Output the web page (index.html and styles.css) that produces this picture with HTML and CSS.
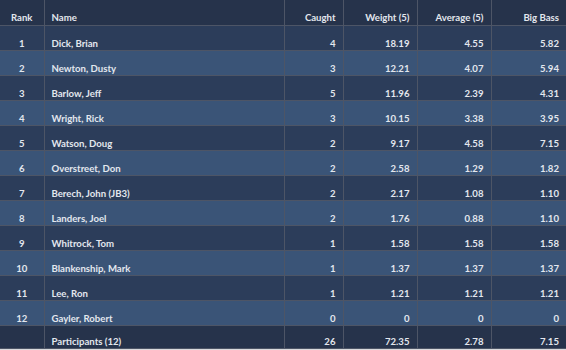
FILE: index.html
```html
<!DOCTYPE html>
<html>
<head>
<meta charset="utf-8">
<link rel="stylesheet" href="styles.css">
</head>
<body>
<table class="standings">
  <colgroup>
    <col class="c-rank"><col class="c-name"><col class="c-caught"><col class="c-weight"><col class="c-avg"><col class="c-big">
  </colgroup>
  <thead>
    <tr><th class="ctr">Rank</th><th class="lft">Name</th><th>Caught</th><th>Weight (5)</th><th>Average (5)</th><th>Big Bass</th></tr>
  </thead>
  <tbody>
    <tr><td class="ctr">1</td><td class="lft">Dick, Brian</td><td>4</td><td>18.19</td><td>4.55</td><td>5.82</td></tr>
    <tr><td class="ctr">2</td><td class="lft">Newton, Dusty</td><td>3</td><td>12.21</td><td>4.07</td><td>5.94</td></tr>
    <tr><td class="ctr">3</td><td class="lft">Barlow, Jeff</td><td>5</td><td>11.96</td><td>2.39</td><td>4.31</td></tr>
    <tr><td class="ctr">4</td><td class="lft">Wright, Rick</td><td>3</td><td>10.15</td><td>3.38</td><td>3.95</td></tr>
    <tr><td class="ctr">5</td><td class="lft">Watson, Doug</td><td>2</td><td>9.17</td><td>4.58</td><td>7.15</td></tr>
    <tr><td class="ctr">6</td><td class="lft">Overstreet, Don</td><td>2</td><td>2.58</td><td>1.29</td><td>1.82</td></tr>
    <tr><td class="ctr">7</td><td class="lft">Berech, John (JB3)</td><td>2</td><td>2.17</td><td>1.08</td><td>1.10</td></tr>
    <tr><td class="ctr">8</td><td class="lft">Landers, Joel</td><td>2</td><td>1.76</td><td>0.88</td><td>1.10</td></tr>
    <tr><td class="ctr">9</td><td class="lft">Whitrock, Tom</td><td>1</td><td>1.58</td><td>1.58</td><td>1.58</td></tr>
    <tr><td class="ctr">10</td><td class="lft">Blankenship, Mark</td><td>1</td><td>1.37</td><td>1.37</td><td>1.37</td></tr>
    <tr><td class="ctr">11</td><td class="lft">Lee, Ron</td><td>1</td><td>1.21</td><td>1.21</td><td>1.21</td></tr>
    <tr><td class="ctr">12</td><td class="lft">Gayler, Robert</td><td>0</td><td>0</td><td>0</td><td>0</td></tr>
  </tbody>
  <tfoot>
    <tr><td class="ctr"></td><td class="lft">Participants (12)</td><td>26</td><td>72.35</td><td>2.78</td><td>7.15</td></tr>
  </tfoot>
</table>
</body>
</html>
```

FILE: styles.css
```css
html, body {
  margin: 0;
  padding: 0;
  background: #d9dadc;
}
.standings {
  width: 566px;
  border-collapse: collapse;
  table-layout: fixed;
  font-family: Lato, "Liberation Sans", sans-serif;
  font-weight: 700;
  font-size: 9.6px;
  color: #e3e7ee;
}
.c-rank { width: 44px; }
.c-name { width: 240px; }
.c-caught { width: 59px; }
.c-weight { width: 74px; }
.c-avg { width: 74px; }
.c-big { width: 75px; }
.standings th,
.standings td {
  height: 24px;
  padding: 0 7px 0 7px;
  vertical-align: bottom;
  text-align: right;
  border: 1px solid #4d5566;
  line-height: 12px;
  white-space: nowrap;
}
.standings tr > :first-child { border-left: none; }
.standings tr > :last-child { border-right: none; }
.standings thead th { background: #26334b; border-top: none; padding-bottom: 1px; }
.standings tbody tr:nth-child(odd) td { background: #2c3d5a; }
.standings tbody tr:nth-child(even) td { background: #3a5477; }
.standings tfoot td { background: #26334b; height: 22px; }
.standings .ctr { text-align: center; }
.standings .lft { text-align: left; }
```
